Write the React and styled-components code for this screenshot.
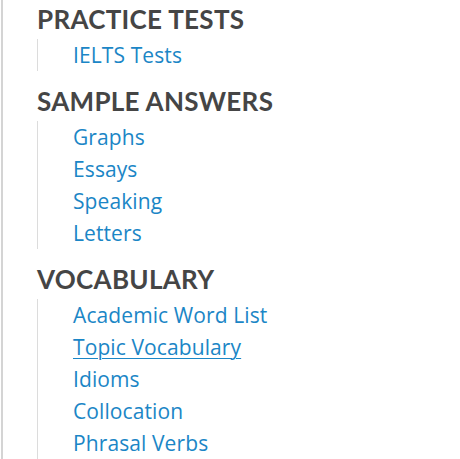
import React from 'react';
import styled, { createGlobalStyle } from 'styled-components';

const GlobalStyle = createGlobalStyle`
  html, body {
    margin: 0;
    padding: 0;
    background: #fff;
  }
`;

const Sidebar = styled.nav`
  box-sizing: border-box;
  width: 460px;
  height: 459px;
  overflow: hidden;
  margin-left: 1px;
  padding: 3px 0 0 34px;
  border-left: 2px solid #d4d4d4;
`;

const Heading = styled.h3`
  margin: ${({ first }) => (first ? '0' : '14px')} 0 4px;
  font-family: 'Lato', 'Liberation Sans', sans-serif;
  font-weight: 700;
  font-size: 26px;
  line-height: 32px;
  color: #454545;
  letter-spacing: 0.3px;
`;

const List = styled.ul`
  list-style: none;
  margin: 0;
  padding: 0 0 0 35px;
  border-left: 1px solid #dcdcdc;
`;

const Item = styled.li`
  font-family: 'Open Sans', 'Liberation Sans', sans-serif;
  font-size: 21px;
  line-height: 32px;
  letter-spacing: 0.1px;
`;

const Link = styled.a`
  color: #1b86c6;
  text-decoration: ${({ hover }) => (hover ? 'underline' : 'none')};
  text-decoration-thickness: 1px;
  text-underline-offset: 3px;
`;

const sections = [
  { title: 'PRACTICE TESTS', links: ['IELTS Tests'] },
  { title: 'SAMPLE ANSWERS', links: ['Graphs', 'Essays', 'Speaking', 'Letters'] },
  {
    title: 'VOCABULARY',
    links: ['Academic Word List', 'Topic Vocabulary', 'Idioms', 'Collocation', 'Phrasal Verbs'],
  },
];

const App = () => (
  <>
    <GlobalStyle />
    <Sidebar>
      {sections.map((section, i) => (
        <div key={section.title}>
          <Heading first={i === 0}>{section.title}</Heading>
          <List>
            {section.links.map(link => (
              <Item key={link}>
                <Link href="#" hover={link === 'Topic Vocabulary'}>
                  {link}
                </Link>
              </Item>
            ))}
          </List>
        </div>
      ))}
    </Sidebar>
  </>
);

export default App;
